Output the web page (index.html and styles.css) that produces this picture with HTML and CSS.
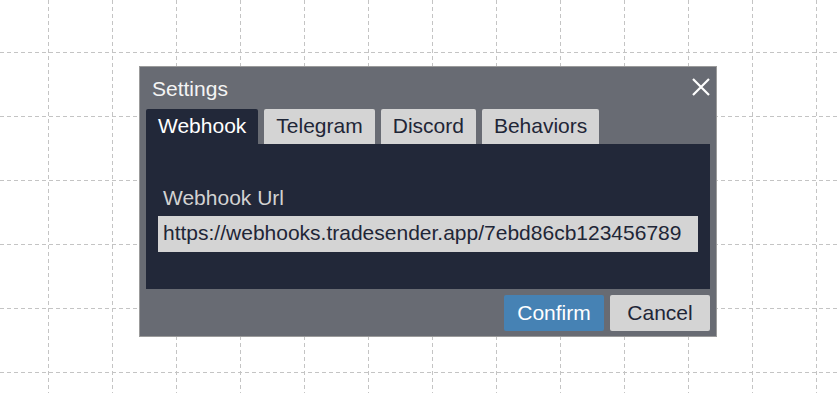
FILE: index.html
```html
<!DOCTYPE html>
<html lang="en">
<head>
<meta charset="utf-8">
<title>Settings</title>
<link rel="stylesheet" href="styles.css">
</head>
<body>
<svg class="grid" width="839" height="393" viewBox="0 0 839 393" aria-hidden="true">
  <g stroke="#c4c4c4" stroke-width="1" stroke-dasharray="4 3">
    <line x1="48.5" y1="0" x2="48.5" y2="393"/>
    <line x1="112.5" y1="0" x2="112.5" y2="393"/>
    <line x1="176.5" y1="0" x2="176.5" y2="393"/>
    <line x1="240.5" y1="0" x2="240.5" y2="393"/>
    <line x1="304.5" y1="0" x2="304.5" y2="393"/>
    <line x1="368.5" y1="0" x2="368.5" y2="393"/>
    <line x1="432.5" y1="0" x2="432.5" y2="393"/>
    <line x1="496.5" y1="0" x2="496.5" y2="393"/>
    <line x1="560.5" y1="0" x2="560.5" y2="393"/>
    <line x1="624.5" y1="0" x2="624.5" y2="393"/>
    <line x1="688.5" y1="0" x2="688.5" y2="393"/>
    <line x1="752.5" y1="0" x2="752.5" y2="393"/>
    <line x1="816.5" y1="0" x2="816.5" y2="393"/>
    <line x1="0" y1="52.5" x2="839" y2="52.5"/>
    <line x1="0" y1="116.5" x2="839" y2="116.5"/>
    <line x1="0" y1="180.5" x2="839" y2="180.5"/>
    <line x1="0" y1="244.5" x2="839" y2="244.5"/>
    <line x1="0" y1="308.5" x2="839" y2="308.5"/>
    <line x1="0" y1="372.5" x2="839" y2="372.5"/>
  </g>
</svg>
<div class="dialog">
  <div class="title-bar">
    <span class="title">Settings</span>
    <button class="close" aria-label="Close">
      <svg width="18" height="18" viewBox="0 0 18 18"><path d="M1 1 L17 17 M17 1 L1 17" stroke="#ffffff" stroke-width="2.2" fill="none"/></svg>
    </button>
  </div>
  <div class="tabs">
    <div class="tab active">Webhook</div>
    <div class="tab">Telegram</div>
    <div class="tab">Discord</div>
    <div class="tab">Behaviors</div>
  </div>
  <div class="panel">
    <div class="label">Webhook Url</div>
    <div class="input">https://webhooks.tradesender.app/7ebd86cb123456789</div>
  </div>
  <div class="footer">
    <button class="btn confirm">Confirm</button>
    <button class="btn cancel">Cancel</button>
  </div>
</div>
</body>
</html>
```
FILE: styles.css
```css
html, body {
  margin: 0;
  background: #ffffff;
}
body {
  position: relative;
  width: 839px;
  height: 393px;
  overflow: hidden;
  box-sizing: border-box;
  padding: 66px 0 0 139px;
  font-family: "Liberation Sans", Arial, sans-serif;
  font-size: 21px;
  line-height: 24px;
}
.grid {
  position: absolute;
  left: 0;
  top: 0;
  z-index: 0;
}
.dialog {
  position: relative;
  z-index: 1;
  width: 578px;
  box-sizing: border-box;
  border: 1px solid #9b9b9b;
  background: #686b73;
  padding: 0 6px 5px;
}
.title-bar {
  height: 42px;
  display: flex;
  justify-content: space-between;
  align-items: flex-start;
  padding-left: 6px;
}
.title {
  color: #f4f4f4;
  padding-top: 10px;
}
.close {
  margin-top: 11px;
  width: 18px;
  height: 18px;
  padding: 0;
  border: 0;
  background: transparent;
  display: block;
}
.close svg {
  display: block;
}
.tabs {
  display: flex;
  gap: 6px;
  height: 35px;
}
.tab {
  box-sizing: border-box;
  height: 35px;
  padding: 5px 12px 6px;
  background: #d4d4d4;
  color: #1f2637;
  border-radius: 2px 2px 0 0;
}
.tab.active {
  background: #222839;
  color: #ffffff;
}
.panel {
  box-sizing: border-box;
  height: 145px;
  background: #222839;
  padding: 42px 12px 0;
}
.label {
  color: #d2d2d2;
  padding-left: 5px;
}
.input {
  margin-top: 6px;
  box-sizing: border-box;
  height: 36px;
  background: #d4d4d4;
  color: #1f2637;
  padding: 5px 5px 7px;
  white-space: nowrap;
}
.footer {
  display: flex;
  justify-content: flex-end;
  gap: 6px;
  padding-top: 6px;
}
.btn {
  width: 100px;
  height: 36px;
  border: 0;
  border-radius: 2px;
  padding: 0;
  font-family: inherit;
  font-size: 21px;
  line-height: 24px;
}
.confirm {
  background: #4682b4;
  color: #ffffff;
}
.cancel {
  background: #d4d4d4;
  color: #1f2637;
}
```
